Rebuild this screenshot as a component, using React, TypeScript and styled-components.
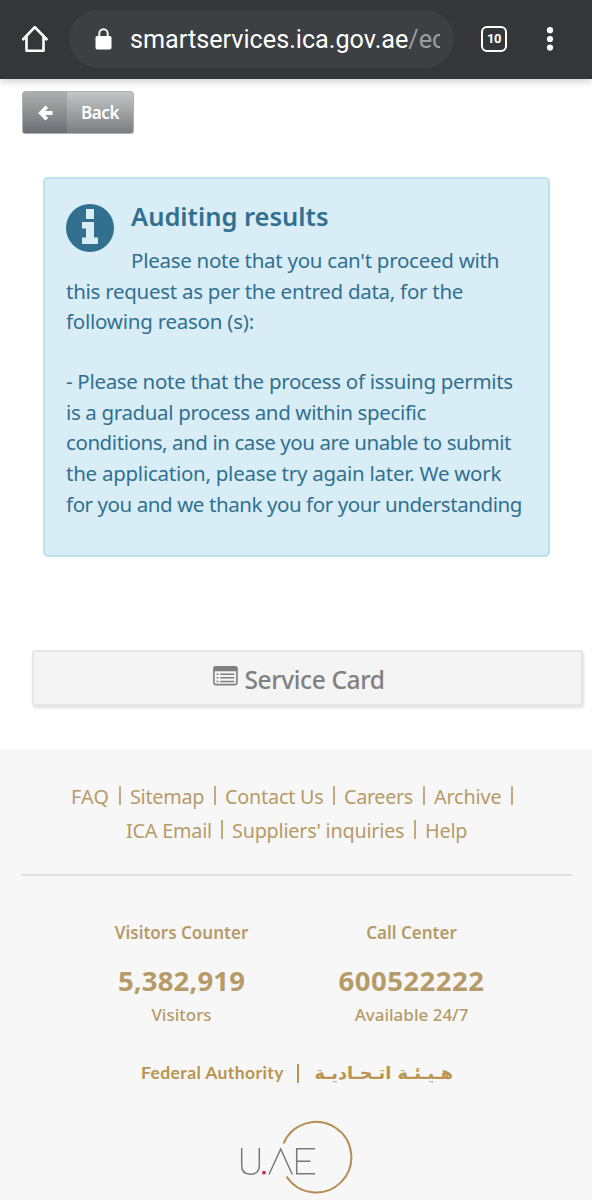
import React from 'react';
import styled, { createGlobalStyle } from 'styled-components';

const GlobalStyle = createGlobalStyle`
  * { box-sizing: border-box; }
  body {
    margin: 0;
    background: #fff;
    font-family: 'Noto Sans', 'Open Sans', sans-serif;
  }
`;

const Page = styled.div`
  width: 592px;
  height: 1200px;
  overflow: hidden;
  display: flex;
  flex-direction: column;
`;

const BrowserBar = styled.header`
  flex: none;
  height: 79px;
  background: #35363a;
  box-shadow: 0 2px 8px rgba(0, 0, 0, 0.22);
  display: flex;
  align-items: flex-start;
  padding: 10px 32px 0 20px;
`;

const HomeIcon = styled.svg`
  flex: none;
  width: 30px;
  height: 30px;
  margin-top: 14px;
`;

const AddressBar = styled.div`
  flex: none;
  display: flex;
  align-items: center;
  width: 385px;
  height: 58px;
  margin-left: 19px;
  padding: 1px 14px 0 26px;
  border-radius: 29px;
  background: #3c4043;
`;

const LockIcon = styled.svg`
  flex: none;
  width: 17px;
  height: 22px;
  margin: -2px 18px 0 0;
`;

const Url = styled.div`
  flex: 1;
  overflow: hidden;
  white-space: nowrap;
  font: 400 25.2px/34px Roboto, sans-serif;
  color: #fff;
`;

const UrlPath = styled.span`
  color: #9b9ea1;
`;

const TabCount = styled.div`
  flex: none;
  width: 26px;
  height: 26px;
  margin: 16px 0 0 27px;
  border: 2.6px solid #fff;
  border-radius: 6px;
  color: #fff;
  font: 700 13px/21px Roboto, sans-serif;
  letter-spacing: -0.4px;
  text-align: center;
`;

const MenuIcon = styled.svg`
  flex: none;
  width: 8px;
  height: 26px;
  margin: 16px 0 0 39px;
`;

const Main = styled.main`
  flex: none;
  height: 670px;
  display: flex;
  flex-direction: column;
  align-items: flex-start;
  padding: 12px 0 0 22px;
`;

const BackButton = styled.button`
  display: flex;
  width: 112px;
  height: 43px;
  padding: 0;
  border: 1px solid #aeb0b2;
  border-radius: 3px;
  overflow: hidden;
  background: linear-gradient(#c4c5c5, #7b7d81);
  color: #fff;
`;

const BackArrow = styled.span`
  display: flex;
  align-items: center;
  justify-content: center;
  width: 44px;
  height: 100%;
  background: linear-gradient(#adafae, #6c6e74);
`;

const BackLabel = styled.span`
  flex: 1;
  font: 600 17px/41px 'Noto Sans', sans-serif;
  letter-spacing: -0.4px;
  text-align: center;
`;

const Alert = styled.section`
  width: 507px;
  height: 380px;
  margin: 43px 0 0 21px;
  padding: 22px 0 0 21px;
  border: 2px solid #bce2ea;
  border-radius: 5px;
  background: #d9edf7;
  color: #31708f;
`;

const AlertHead = styled.div`
  display: flex;
  height: 44px;
`;

const InfoIcon = styled.svg`
  flex: none;
  width: 48px;
  height: 48px;
  margin: 3px 17px 0 0;
`;

const AlertTitle = styled.h4`
  margin: 0;
  font-size: 25.5px;
  line-height: 30px;
  font-weight: 600;
`;

const Line = styled.div<{ $track: number; $indent?: boolean }>`
  height: 30.7px;
  padding-left: ${(p) => (p.$indent ? '65px' : '0')};
  font-size: 20.5px;
  line-height: 30.7px;
  letter-spacing: ${(p) => p.$track}px;
  white-space: nowrap;
`;

const Paragraph = styled.div`
  & + & {
    margin-top: 29px;
  }
`;

const ServiceCard = styled.button`
  display: flex;
  align-items: flex-start;
  width: 551px;
  height: 56px;
  margin: 93px 0 0 10px;
  padding: 11px 0 0 179px;
  border: 2px solid #e6e6e6;
  border-radius: 3px;
  background: #f4f4f4;
  box-shadow: 1px 2px 3px rgba(0, 0, 0, 0.12);
  color: #808080;
  font: 500 24.5px/34px 'Noto Sans', sans-serif;
  letter-spacing: -0.37px;
  white-space: nowrap;
`;

const CardIcon = styled.svg`
  flex: none;
  width: 25px;
  height: 20px;
  margin: 3px 6.5px 0 0;
`;

const Footer = styled.footer`
  flex: 1;
  background: #f7f7f7;
  color: #b69a68;
  padding: 0 20px 0 21px;
`;

const Links = styled.nav`
  height: 125px;
  padding-top: 31px;
`;

const LinkRow = styled.div`
  display: flex;
  height: 34px;
  padding-left: 50px;

  & + & {
    padding-left: 105px;
  }
`;

const LinkItem = styled.a<{ $w: number; $track: number; $bar?: boolean }>`
  position: relative;
  width: ${(p) => p.$w}px;
  font-size: 19.8px;
  line-height: 33px;
  letter-spacing: ${(p) => p.$track}px;
  white-space: nowrap;

  &::after {
    content: '';
    display: ${(p) => (p.$bar ? 'block' : 'none')};
    position: absolute;
    right: 9px;
    top: 6px;
    width: 2px;
    height: 19px;
    background: #c3ab80;
  }
`;

const Rule = styled.hr`
  height: 2px;
  margin: 0;
  border: 0;
  background: #e1dfdf;
`;

const Stats = styled.div`
  display: grid;
  grid-template-columns: 230px 230px;
  padding: 42px 0 0 45.5px;
  text-align: center;
`;

const StatTitle = styled.div`
  height: 39px;
  font-size: 17px;
  line-height: 29px;
  font-weight: 600;
`;

const StatValue = styled.div<{ $track: number }>`
  height: 46px;
  font-size: 27.5px;
  line-height: 48px;
  font-weight: 700;
  letter-spacing: ${(p) => p.$track}px;
`;

const StatNote = styled.div`
  height: 24px;
  font-size: 17px;
  line-height: 24px;
  font-weight: 500;
`;

const Authority = styled.div`
  display: flex;
  align-items: center;
  height: 30px;
  margin: 31px 0 0 120px;
  color: #ba9450;
  font: 700 17.5px/30px Lato, 'Noto Sans', sans-serif;
`;

const AuthorityName = styled.span`
  flex: none;
  width: 143px;
  letter-spacing: 0.4px;
  white-space: nowrap;
`;

const AuthorityBar = styled.span`
  flex: none;
  width: 2px;
  height: 19px;
  margin: 0 14px 0 13px;
  background: currentColor;
`;

const ArabicName = styled.span`
  flex: none;
  width: 140px;
  font: 700 17.7px/30px 'DejaVu Sans', sans-serif;
  white-space: nowrap;
`;

const UaeLogo = styled.svg`
  display: block;
  width: 116px;
  height: 76px;
  margin: 31px 0 0 217px;
`;

const reasons: [string, number][] = [
  ['- Please note that the process of issuing permits', -0.31],
  ['is a gradual process and within specific', -0.36],
  ['conditions, and in case you are unable to submit', -0.43],
  ['the application, please try again later. We work', -0.26],
  ['for you and we thank you for your understanding', -0.42],
];

const linkRows: { text: string; w: number; track: number; bar: boolean }[][] = [
  [
    { text: 'FAQ', w: 59, track: 0.2, bar: true },
    { text: 'Sitemap', w: 95, track: -0.25, bar: true },
    { text: 'Contact Us', w: 119, track: -0.2, bar: true },
    { text: 'Careers', w: 90, track: -0.35, bar: true },
    { text: 'Archive', w: 88, track: -0.15, bar: true },
  ],
  [
    { text: 'ICA Email', w: 106, track: -0.2, bar: true },
    { text: "Suppliers' inquiries", w: 193, track: -0.22, bar: true },
    { text: 'Help', w: 43, track: -0.2, bar: false },
  ],
];

export default function App() {
  return (
    <Page>
      <GlobalStyle />
      <BrowserBar>
        <HomeIcon viewBox="0 0 30 30" fill="none" stroke="#fff" strokeWidth="2.6" strokeLinejoin="round">
          <path d="M2.5 16 L14.8 3.2 L27.3 16 M6.5 12.5 V26.7 H23.5 V12.5" />
        </HomeIcon>
        <AddressBar>
          <LockIcon viewBox="0 0 17 22">
            <rect x="0.5" y="8" width="16" height="13.5" rx="1.8" fill="#fff" />
            <path d="M4.3 9 V5.5 a4.2 4.2 0 0 1 8.4 0 V9" fill="none" stroke="#fff" strokeWidth="1.9" />
          </LockIcon>
          <Url>
            smartservices.ica.gov.ae<UrlPath>/ec</UrlPath>
          </Url>
        </AddressBar>
        <TabCount>10</TabCount>
        <MenuIcon viewBox="0 0 8 26" fill="#fff">
          <circle cx="4" cy="4.2" r="3.1" />
          <circle cx="4" cy="13" r="3.1" />
          <circle cx="4" cy="21.6" r="3.1" />
        </MenuIcon>
      </BrowserBar>

      <Main>
        <BackButton>
          <BackArrow>
            <svg width="15" height="16" viewBox="0 0 15 16" fill="none" stroke="#fff" strokeWidth="3.8">
              <path d="M8.8 1.7 L2.8 8 L8.8 14.3 M3.5 8 H14.5" />
            </svg>
          </BackArrow>
          <BackLabel>Back</BackLabel>
        </BackButton>

        <Alert>
          <AlertHead>
            <InfoIcon viewBox="0 0 48 48">
              <circle cx="24" cy="24" r="24" fill="#31708f" />
              <path
                d="M20 5 H28 V15 H20 Z M16 18 H28 V33.5 H32 V40 H16 V33.5 H20 V24.5 H16 Z"
                fill="#d9edf7"
              />
            </InfoIcon>
            <AlertTitle>Auditing results</AlertTitle>
          </AlertHead>
          <Paragraph>
            <Line $track={-0.27} $indent>
              Please note that you can't proceed with
            </Line>
            <Line $track={-0.27}>this request as per the entred data, for the</Line>
            <Line $track={-0.24}>following reason (s):</Line>
          </Paragraph>
          <Paragraph>
            {reasons.map(([text, track]) => (
              <Line key={text} $track={track}>
                {text}
              </Line>
            ))}
          </Paragraph>
        </Alert>

        <ServiceCard>
          <CardIcon viewBox="0 0 25 20">
            <rect x="0.9" y="0.9" width="23" height="17.7" rx="2" fill="none" stroke="#808080" strokeWidth="1.6" />
            <path d="M0.5 5.2 V2.5 Q0.5 0.3 2.5 0.3 H22.5 Q24.5 0.3 24.5 2.5 V5.2 Z" fill="#808080" />
            <path
              d="M3.6 8.2 H5.4 M3.6 11.8 H5.4 M3.6 15.4 H5.4 M7.2 8.2 H21.2 M7.2 11.8 H21.2 M7.2 15.4 H21.2"
              stroke="#808080"
              strokeWidth="1.5"
            />
          </CardIcon>
          Service Card
        </ServiceCard>
      </Main>

      <Footer>
        <Links>
          {linkRows.map((row) => (
            <LinkRow key={row[0].text}>
              {row.map((l) => (
                <LinkItem key={l.text} $w={l.w} $track={l.track} $bar={l.bar}>
                  {l.text}
                </LinkItem>
              ))}
            </LinkRow>
          ))}
        </Links>
        <Rule />
        <Stats>
          <div>
            <StatTitle>Visitors Counter</StatTitle>
            <StatValue $track={0.15}>5,382,919</StatValue>
            <StatNote>Visitors</StatNote>
          </div>
          <div>
            <StatTitle>Call Center</StatTitle>
            <StatValue $track={0.5}>600522222</StatValue>
            <StatNote>Available 24/7</StatNote>
          </div>
        </Stats>
        <Authority>
          <AuthorityName>Federal Authority</AuthorityName>
          <AuthorityBar />
          <ArabicName dir="rtl" lang="ar">
            هـيـئـة اتـحـاديـة
          </ArabicName>
        </Authority>
        <UaeLogo viewBox="0 0 116 76" fill="none">
          <path
            d="M45.5 24.5 A35.3 35.3 0 1 1 48.5 57.5"
            stroke="#b58d55"
            strokeWidth="2"
          />
          <g stroke="#77787b" strokeWidth="1.5">
            <path d="M3.7 29 V46.5 Q3.7 55.2 12.3 55.2 Q21.3 55.2 21.3 46.5 V29" />
            <path d="M31 55.5 L42.7 30 L54.3 55.5" />
            <path d="M77 29.8 H58.7 V54.8 H77 M58.7 42.3 H72.5" />
          </g>
          <circle cx="26" cy="53.7" r="1.9" fill="#d9264c" />
        </UaeLogo>
      </Footer>
    </Page>
  );
}
